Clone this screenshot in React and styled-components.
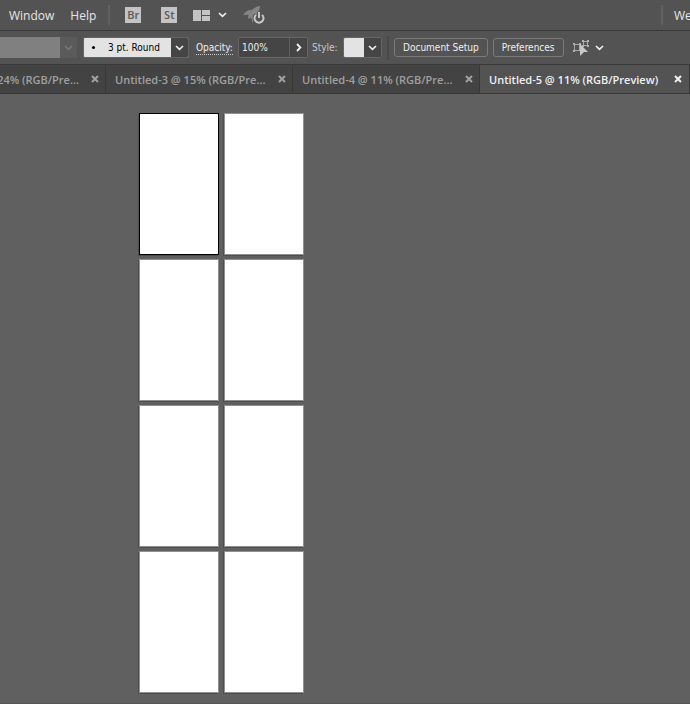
import React from 'react';
import styled, { createGlobalStyle } from 'styled-components';

const tabs = [
    { name: '24% (RGB/Pre...', size: 'clipped' },
    { name: 'Untitled-3 @ 15% (RGB/Pre...', size: 'normal' },
    { name: 'Untitled-4 @ 11% (RGB/Pre...', size: 'normal' },
    { name: 'Untitled-5 @ 11% (RGB/Preview)', size: 'active' },
];

const tabWidths = {
    clipped: '106px',
    normal: '187px',
    active: '210px',
};

const artboards = [1, 2, 3, 4, 5, 6, 7, 8];

const Chevron = ({ color = '#f0f0f0' }) => (
    <svg width="9" height="6" viewBox="0 0 9 6" fill="none" stroke={color} strokeWidth="1.6">
        <path d="M1 1l3.5 3.4L8 1" />
    </svg>
);

const ArrowRight = () => (
    <svg width="6" height="9" viewBox="0 0 6 9" fill="none" stroke="#f0f0f0" strokeWidth="1.8">
        <path d="M1 1l3.4 3.5L1 8" />
    </svg>
);

const CloseIcon = () => (
    <svg width="8" height="8" viewBox="0 0 8 8" stroke="currentColor" strokeWidth="2">
        <path d="M1 1l6 6M7 1L1 7" />
    </svg>
);

const ArrangeIcon = () => (
    <svg width="17" height="11" viewBox="0 0 17 11" fill="#c4c4c4">
        <path d="M0 0h8v11H0zM9 0h8v5H9zM9 6h8v5H9z" />
    </svg>
);

const RocketIcon = () => (
    <svg width="22" height="18" viewBox="0 0 22 18">
        <g fill="#858585">
            <path d="M17 0C12 .8 8 3.5 5.600 8.200L5 13l4-2C13.500 8.500 16.800 5.500 17 0z" />
            <path d="M0 9.300C2 6 4.300 4 8.500 3.700L5.300 9C3.200 8.500 1.800 8.600 0 9.300z" />
            <path d="M7.500 11.300l6.500-4-.8 5-4 4.700c.2-2.200-.5-4.200-1.700-5.700z" />
        </g>
        <path d="M12.900 8.900a4.500 4.500 0 1 0 6.200 0M16 6v6" fill="none" stroke="#535353" strokeWidth="4" />
        <path d="M12.900 8.900a4.500 4.500 0 1 0 6.200 0M16 6v6" fill="none" stroke="#c8c8c8" strokeWidth="2" />
    </svg>
);

const SelectSimilarIcon = () => (
    <svg width="17" height="17" viewBox="0 0 17 17">
        <g fill="none" stroke="#a8a8a8">
            <rect x="1.5" y="5.5" width="5" height="6" />
            <rect x="10.5" y="2.5" width="4" height="4" />
        </g>
        <path
            d="M0 4h2v2H0zM0 11h2v2H0zM6 4h2v2H6zM9 1h2v2H9zM14 1h2v2h-2zM14 6h2v2h-2zM9 6h2v2H9z"
            fill="#b0b0b0"
        />
        <path d="M7 5v12l4-4h4z" fill="#c8c8c8" />
    </svg>
);

export default function App() {
    return (
        <Window>
            <GlobalStyle />
            <MenuBar>
                <Menus>
                    <MenuItem>Window</MenuItem>
                    <MenuItem>Help</MenuItem>
                </Menus>
                <MenuDivider />
                <AppTools>
                    <AppBadge>Br</AppBadge>
                    <AppBadge>St</AppBadge>
                </AppTools>
                <ArrangeButton aria-label="Arrange documents">
                    <ArrangeIcon />
                    <Chevron />
                </ArrangeButton>
                <IconButton aria-label="GPU performance">
                    <RocketIcon />
                </IconButton>
                <Workspace>
                    <MenuDivider />
                    <MenuItem>We</MenuItem>
                </Workspace>
            </MenuBar>

            <ControlBar>
                <ProfileButton disabled aria-label="Variable width profile">
                    <ProfileValue />
                    <DropArrow $dim>
                        <Chevron color="#777777" />
                    </DropArrow>
                </ProfileButton>
                <BrushPicker>
                    <Dot />
                    <BrushSelect aria-label="Brush definition">
                        <option>3 pt. Round</option>
                    </BrushSelect>
                    <DropArrow>
                        <Chevron />
                    </DropArrow>
                </BrushPicker>
                <OpacityLabel htmlFor="opacity">Opacity:</OpacityLabel>
                <OpacityField>
                    <OpacityInput id="opacity" defaultValue="100%" />
                    <OpacityArrow aria-label="Opacity options">
                        <ArrowRight />
                    </OpacityArrow>
                </OpacityField>
                <StyleLabel htmlFor="style">Style:</StyleLabel>
                <StyleButton id="style">
                    <Swatch />
                    <DropArrow>
                        <Chevron />
                    </DropArrow>
                </StyleButton>
                <BarDivider />
                <Actions>
                    <TextButton>Document Setup</TextButton>
                    <TextButton>Preferences</TextButton>
                </Actions>
                <SimilarButton aria-label="Select similar objects">
                    <SelectSimilarIcon />
                    <Chevron />
                </SimilarButton>
            </ControlBar>

            <TabBar>
                {tabs.map((tab) => (
                    <Tab key={tab.name} $size={tab.size}>
                        <TabTitle>{tab.name}</TabTitle>
                        <CloseButton aria-label={`Close ${tab.name}`}>
                            <CloseIcon />
                        </CloseButton>
                    </Tab>
                ))}
            </TabBar>

            <Canvas>
                {artboards.map((id) => (
                    <Artboard key={id} $active={id === 1} />
                ))}
            </Canvas>
        </Window>
    );
}

const GlobalStyle = createGlobalStyle`
    * {
        box-sizing: border-box;
    }
    body {
        margin: 0;
        background: #606060;
        font-family: 'Open Sans', 'Noto Sans', sans-serif;
        font-size: 11px;
        color: #f0f0f0;
    }
    button, input, select {
        margin: 0;
        padding: 0;
        border: 0;
        background: none;
        font: inherit;
        color: inherit;
    }
    svg {
        display: block;
        flex: none;
    }
`;

const Window = styled.div`
    min-height: 100vh;
    display: flex;
    flex-direction: column;
    overflow: hidden;
`;

const MenuBar = styled.nav`
    height: 31px;
    padding-left: 9px;
    display: flex;
    align-items: center;
    background: #535353;
    border-bottom: 1px solid #3a3a3a;
`;
const Menus = styled.div`
    margin-right: 12px;
    display: flex;
    gap: 16px;
`;
const MenuItem = styled.button`
    font-size: 12px;
    color: #e6e6e6;
`;
const MenuDivider = styled.span`
    flex: none;
    width: 2px;
    height: 20px;
    background: #616161;
`;
const AppTools = styled.div`
    margin: 0 16px 0 15px;
    display: flex;
    gap: 20px;
`;
const AppBadge = styled.button`
    width: 16px;
    height: 16px;
    line-height: 16px;
    background: #c4c4c4;
    color: #5a5a5a;
    font-weight: 600;
    text-align: center;
`;
const IconButton = styled.button`
    display: flex;
    align-items: center;
`;
const ArrangeButton = styled(IconButton)`
    margin-right: 16px;
    gap: 8px;
`;
const Workspace = styled.div`
    margin-left: auto;
    flex: 0 0 29px;
    display: flex;
    align-items: center;
    gap: 11px;
    overflow: hidden;
`;

const ControlBar = styled.div`
    height: 34px;
    display: flex;
    align-items: center;
    background: #535353;
    border-bottom: 1px solid #3a3a3a;
    font-family: 'DejaVu Sans Condensed', 'DejaVu Sans', sans-serif;
    font-size: 10px;
`;
const DropArrow = styled.span`
    flex: 0 0 17px;
    align-self: stretch;
    display: flex;
    align-items: center;
    justify-content: center;
    background: ${({ $dim }) => ($dim ? '#5a5a5a' : '#454545')};
    pointer-events: none;
`;
const ProfileButton = styled.button`
    width: 77px;
    height: 21px;
    margin-right: 6px;
    display: flex;
`;
const ProfileValue = styled.span`
    flex: 1;
    align-self: stretch;
    background: #808080;
`;
const BrushPicker = styled.div`
    width: 106px;
    height: 21px;
    margin-right: 7px;
    display: flex;
    align-items: center;
    border: 1px solid #636363;
    border-radius: 2px;
    background: #e3e3e3;
    color: #000000;
    overflow: hidden;
`;
const Dot = styled.span`
    width: 3px;
    height: 3px;
    margin: 0 13px 0 8px;
    border-radius: 50%;
    background: #000000;
`;
const BrushSelect = styled.select`
    flex: 1;
    min-width: 0;
    appearance: none;
`;
const OpacityLabel = styled.label`
    min-width: 37px;
    margin-right: 5px;
    line-height: 13px;
    border-bottom: 1px dotted #c8c8c8;
`;
const Field = styled.div`
    height: 21px;
    display: flex;
    border: 1px solid #666666;
    border-radius: 2px;
    background: #454545;
    overflow: hidden;
`;
const OpacityField = styled(Field)`
    width: 70px;
`;
const OpacityInput = styled.input`
    flex: 1;
    min-width: 0;
    padding-left: 3px;
`;
const OpacityArrow = styled.button`
    flex: 0 0 18px;
    display: flex;
    align-items: center;
    justify-content: center;
    border-left: 1px solid #606060;
    background: #454545;
`;
const StyleLabel = styled.label`
    min-width: 26px;
    margin: 0 5px 0 4px;
    color: #c8c8c8;
`;
const StyleButton = styled(Field).attrs({ as: 'button' })`
    width: 39px;
    border: 1px solid #666666;
    background: #454545;
`;
const Swatch = styled.span`
    flex: 1;
    align-self: stretch;
    background: #e3e3e3;
`;
const BarDivider = styled.span`
    width: 2px;
    height: 24px;
    margin: 0 5px;
    background: #494949;
`;
const Actions = styled.div`
    display: flex;
    gap: 5px;
`;
const TextButton = styled.button`
    height: 19px;
    padding: 0 8px;
    border: 1px solid #7a7a7a;
    border-radius: 3px;
    white-space: nowrap;
`;
const SimilarButton = styled(IconButton)`
    margin-left: 9px;
    gap: 5px;
`;

const TabBar = styled.div`
    height: 29px;
    display: flex;
    background: #434343;
    border-bottom: 1px solid #383838;
`;
const Tab = styled.div`
    flex: 0 0 ${({ $size }) => tabWidths[$size]};
    min-width: 0;
    padding: 0 ${({ $size }) => ($size === 'active' ? '7px' : '6px')} 0 9px;
    display: flex;
    align-items: center;
    justify-content: ${({ $size }) => ($size === 'clipped' ? 'flex-end' : 'space-between')};
    gap: 12px;
    border-right: 1px solid #383838;
    background: ${({ $size }) => ($size === 'active' ? '#535353' : '#434343')};
    color: ${({ $size }) => ($size === 'active' ? '#f0f0f0' : '#a0a0a0')};
    overflow: hidden;
`;
const TabTitle = styled.button`
    flex: none;
    font-weight: 600;
    white-space: nowrap;
`;
const CloseButton = styled.button`
    display: flex;
`;

const Canvas = styled.main`
    flex: 1;
    padding: 19px 0 10px 139px;
    display: grid;
    grid-template-columns: 80px 80px;
    grid-auto-rows: 142px;
    gap: 4px 5px;
    align-content: start;
    background: #606060;
    border-bottom: 1px solid #585256;
`;
const Artboard = styled.section`
    background: #ffffff;
    border: 1px solid ${({ $active }) => ($active ? '#000000' : '#909090')};
    box-shadow: -1px 1px 0 #4d4d4d;
`;
